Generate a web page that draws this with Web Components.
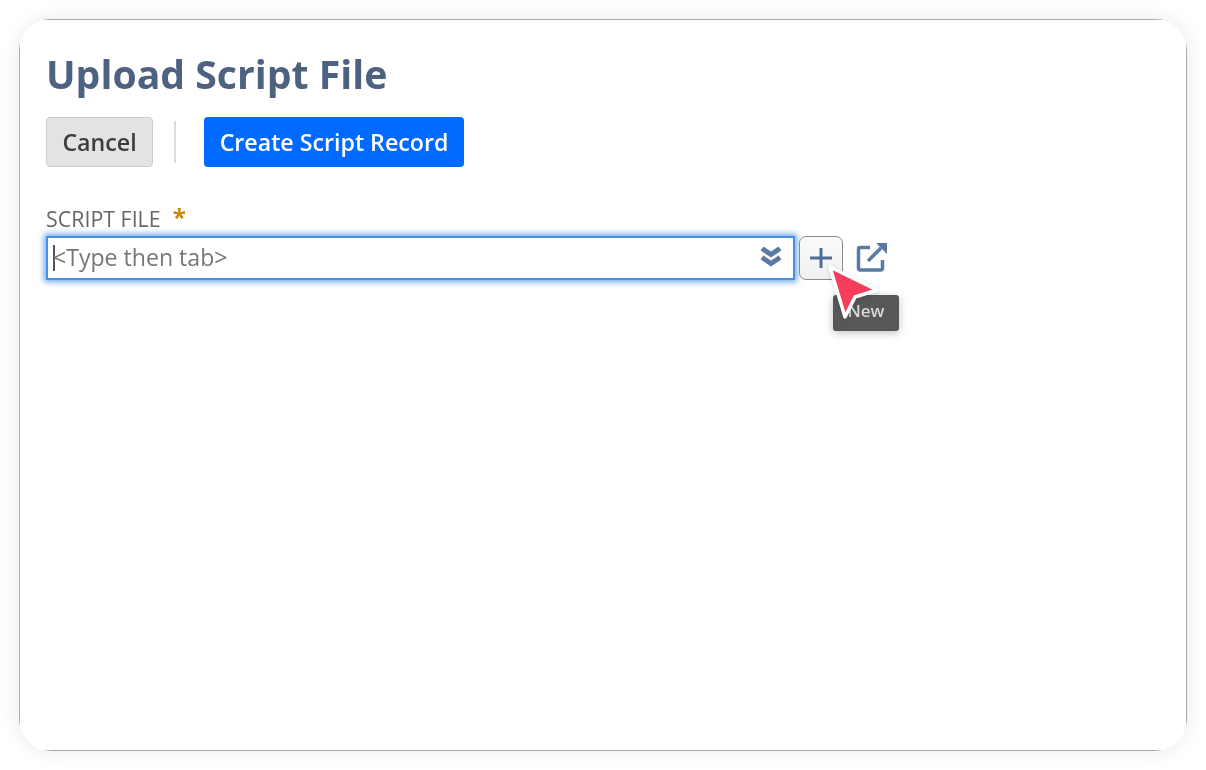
<!DOCTYPE html>
<html>
<head>
<meta charset="utf-8">
<title>Upload Script File</title>
<style>
  html, body { margin: 0; height: 100%; background: #fff; }
  body { font-family: "Open Sans", "Liberation Sans", sans-serif; overflow: hidden; }
</style>
</head>
<body>
<template id="upload-card-tpl">
  <style>
    :host { display: block; box-sizing: border-box; width: 1206px; height: 770px; padding: 19px; }
    .card { height: 100%; border-radius: 32px; overflow: hidden; background: #fff; box-shadow: 0 0 20px rgba(0,0,0,.09); }
    .inner { box-sizing: border-box; height: 100%; border: 1px solid #a9a9a9; padding: 30px 26px 0; }
    .content { filter: blur(.7px); }
    h1 { margin: 0 0 19px; font: 700 39.200px/48px "Open Sans", sans-serif; color: #4d6180; }
  </style>
  <div class="card"><div class="inner"><div class="content">
    <h1>Upload Script File</h1>
    <slot></slot>
  </div></div></div>
</template>

<template id="action-bar-tpl">
  <style>
    :host { display: flex; align-items: center; height: 50px; }
    button { font: 600 23.200px/1 "Open Sans", sans-serif; height: 50px; box-sizing: border-box; border-radius: 4px; cursor: pointer; padding: 2px 0 0; }
    .cancel { width: 107px; background: #e3e3e3; border: 1px solid #cdcdcd; color: #3d3d3d; }
    .sep { width: 2px; height: 42px; background: #dcdcdc; margin: 0 28px 0 21px; }
    .go { width: 260px; background: #0069ff; border: 0; color: #fff; }
  </style>
  <button class="cancel">Cancel</button>
  <span class="sep"></span>
  <button class="go">Create Script Record</button>
</template>

<template id="lookup-field-tpl">
  <style>
    :host { display: block; margin-top: 40px; position: relative; }
    .label { font: 400 21.400px/24px "Open Sans", sans-serif; color: #666; height: 29px; display: flex; align-items: flex-start; }
    .star { color: #c8860d; font-weight: 700; font-size: 24px; line-height: 24px; margin-left: 12px; margin-top: -2px; }
    .row { display: flex; align-items: center; }
    .input { box-sizing: border-box; width: 749px; height: 44px; border: 2px solid #4a90e2; background: #fff; box-shadow: 0 0 6px 2px rgba(74,144,226,.8); display: flex; align-items: center; padding: 0 11px 0 5px; }
    .caret { width: 2px; height: 26px; background: #555; flex: none; margin-right: -2px; }
    .ph { flex: 1; font: 400 23.100px/1 "Open Sans", sans-serif; color: #777; }
    .plus { box-sizing: border-box; width: 44px; height: 44px; margin: -1px 0 0 4px; border: 1.500px solid #8a8a8a; border-radius: 7px; background: linear-gradient(#fbfbfb, #f1f1f1); display: flex; align-items: center; justify-content: center; }
    .open { margin-left: 13px; display: flex; }
    svg { display: block; }
  </style>
  <div class="label">SCRIPT FILE<span class="star">*</span></div>
  <div class="row">
    <div class="input">
      <span class="caret"></span>
      <span class="ph">&lt;Type then tab&gt;</span>
      <svg width="22" height="23" viewBox="0 0 22 23" fill="none" stroke="#5b7a9f" stroke-width="5">
        <path d="M2 1.500l9 6 9-6"/><path d="M2 10.500l9 6 9-6"/>
      </svg>
    </div>
    <div class="plus">
      <svg width="24" height="24" viewBox="0 0 24 24" stroke="#4f6f98" stroke-width="3" fill="none"><path d="M12 2v20M1 12h22"/></svg>
    </div>
    <div class="open">
      <svg width="32" height="32" viewBox="0 0 32 32" fill="none" stroke="#5a7aa3" stroke-width="3.500">
        <path d="M14 5.500H4a1.500 1.500 0 0 0-1.500 1.500v19.500a1.500 1.500 0 0 0 1.500 1.500h21a1.500 1.500 0 0 0 1.500-1.500V18"/>
        <path d="M12 19L25 6"/>
        <path d="M20 1h11v11z" fill="#5a7aa3" stroke="none"/>
      </svg>
    </div>
  </div>
  <slot></slot>
</template>

<template id="new-tooltip-tpl">
  <style>
    :host { position: absolute; left: 787px; top: 88px; display: block; }
    .tip { box-sizing: border-box; width: 66px; height: 36px; border-radius: 3px; background: #555856; color: #d8d8d8; font: 600 17px/32px "Open Sans", sans-serif; text-align: center; box-shadow: 0 2px 8px rgba(0,0,0,.25); }
  </style>
  <div class="tip">New</div>
</template>

<template id="demo-cursor-tpl">
  <style>
    :host { position: absolute; left: 776px; top: 53px; display: block; width: 66px; height: 66px; }
    svg { display: block; filter: drop-shadow(0 1px 2px rgba(0,0,0,.15)); }
  </style>
  <svg width="66" height="66" viewBox="0 0 66 66">
    <path d="M8 7L55 30L33 37L23 57Z" fill="#f63d5c" stroke="#fff" stroke-width="3.500" stroke-linejoin="round"/>
  </svg>
</template>

<upload-card>
  <action-bar></action-bar>
  <lookup-field>
    <new-tooltip></new-tooltip>
    <demo-cursor></demo-cursor>
  </lookup-field>
</upload-card>

<script>
  // every element just stamps its template into an open shadow root
  for (const name of ["upload-card", "action-bar", "lookup-field", "new-tooltip", "demo-cursor"]) {
    customElements.define(name, class extends HTMLElement {
      constructor() {
        super();
        this.attachShadow({ mode: "open" }).appendChild(document.getElementById(name + "-tpl").content.cloneNode(true));
      }
    });
  }
</script>
</body>
</html>
